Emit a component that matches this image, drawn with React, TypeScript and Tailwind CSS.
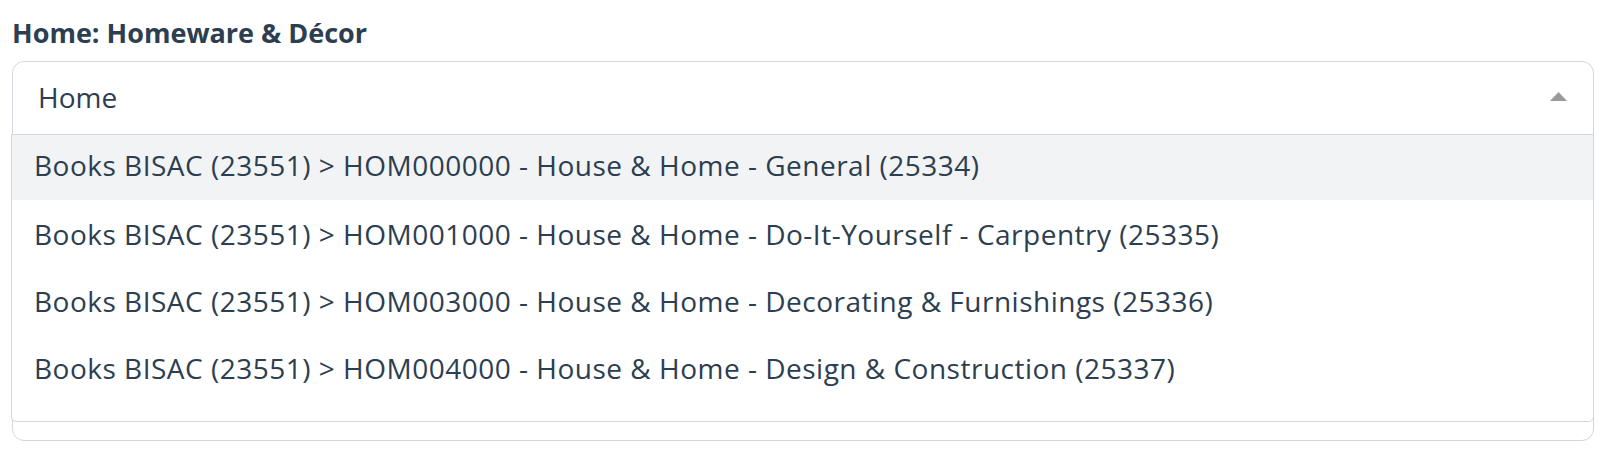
const options = [
  'Books BISAC (23551) > HOM000000 - House & Home - General (25334)',
  'Books BISAC (23551) > HOM001000 - House & Home - Do-It-Yourself - Carpentry (25335)',
  'Books BISAC (23551) > HOM003000 - House & Home - Decorating & Furnishings (25336)',
  'Books BISAC (23551) > HOM004000 - House & Home - Design & Construction (25337)',
];

export default function App() {
  return (
    <div className="min-h-screen bg-white px-3 pt-[15px] font-['Open_Sans',sans-serif] text-[#2c3e50]">
      <label className="block text-[27px] font-bold leading-9 mb-[10px]">Home: Homeware &amp; Décor</label>

      <div className="relative w-[1582px] h-[380px] rounded-[12px] border border-[#d3d6dc] bg-white">
        {/* select control */}
        <div className="relative flex h-[72px] items-center justify-between pl-[25px] pr-[26px]">
          <span className="text-[28px] leading-9 pb-[2px]">Home</span>
          <svg width="17" height="9" viewBox="0 0 17 9" className="mb-[4px]">
            <path d="M8.5 0 L17 9 L0 9 Z" fill="#9a9a9a" />
          </svg>

          {/* open menu */}
          <div className="absolute left-[-2px] right-[-1px] top-full h-[288px] overflow-hidden rounded-b-[5px] border border-[#d3d6dc] bg-white">
            {options.map((option, index) => (
              <div
                key={index}
                className={`flex items-center pl-[22px] pb-[5px] text-[28px] tracking-[0.5px] whitespace-nowrap ${
                  index === 0 ? 'h-[65px] mb-[3px] bg-[#f2f3f5]' : 'h-[67px]'
                }`}
              >
                {option}
              </div>
            ))}
          </div>
        </div>
      </div>
    </div>
  );
}
